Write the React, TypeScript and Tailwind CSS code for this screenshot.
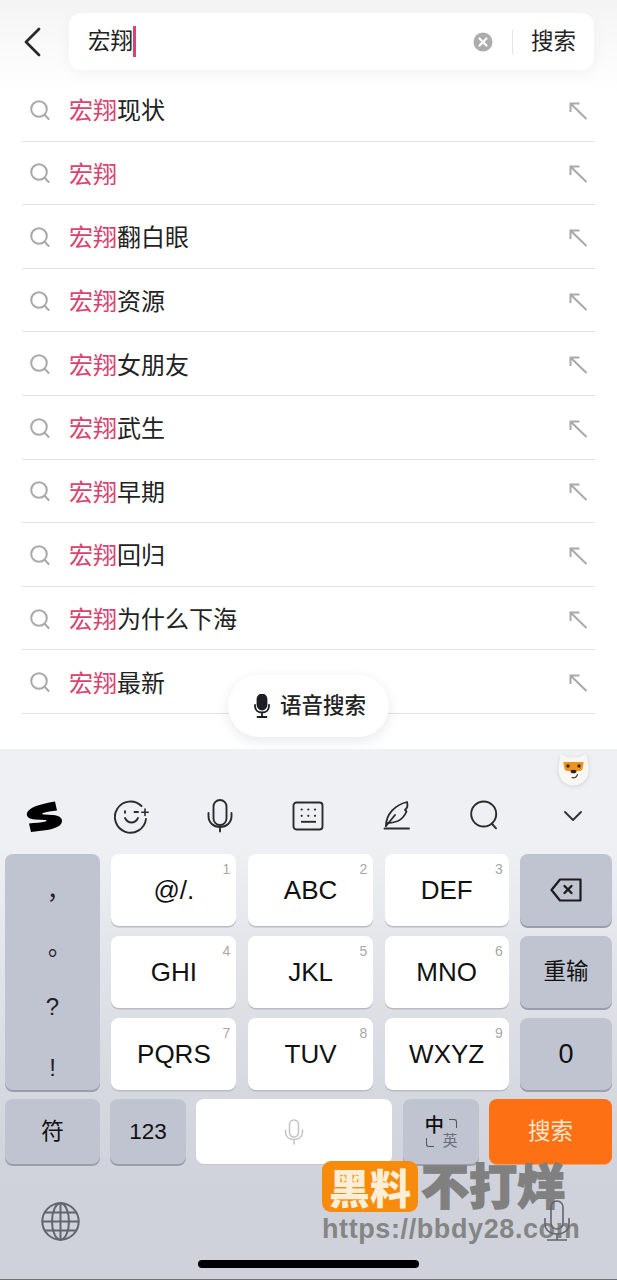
import { ReactNode } from "react";

const cjk = "font-['Liberation_Sans','Noto_Sans_CJK_SC',sans-serif]";

const suggestions = [
  "现状",
  "",
  "翻白眼",
  "资源",
  "女朋友",
  "武生",
  "早期",
  "回归",
  "为什么下海",
  "最新",
];

const SearchGlyph = () => (
  <svg width="22" height="22" viewBox="0 0 22 22" fill="none" stroke="#a9a9a9" strokeWidth="2" strokeLinecap="round">
    <circle cx="10" cy="10" r="7.8" />
    <path d="M15.6 15.8 19.6 20" />
  </svg>
);

const ArrowGlyph = () => (
  <svg width="20" height="20" viewBox="0 0 20 20" fill="none" stroke="#a9a9a9" strokeWidth="2">
    <path d="M2.5 1.6V11M1.6 2.5H11.5M2.5 2.5 18.5 18" />
  </svg>
);

const SuggestionRow = ({ suffix }: { suffix: string }) => (
  <div className="h-[63.6px] mx-[22px] flex items-center border-b border-[#e2e2e2]">
    <div className="w-[47px] pl-[7px] pt-[1px] shrink-0 flex">
      <SearchGlyph />
    </div>
    <div className="flex-1 text-[24px] leading-none pt-[4px] text-[#222]">
      <span className="text-[#d9436f]">宏翔</span>
      {suffix}
    </div>
    <div className="pr-[7px] pt-[3px] flex">
      <ArrowGlyph />
    </div>
  </div>
);

const Key = ({
  num,
  children,
  className = "bg-white shadow-[0_1.5px_0_#b9bcc6]",
}: {
  num?: string;
  children?: ReactNode;
  className?: string;
}) => (
  <div className={`relative flex items-center justify-center rounded-[8px] text-[26px] text-[#111] ${className}`}>
    {num && <span className="absolute top-[5px] right-[6px] text-[14px] leading-[20px] text-[#a8a8a8]">{num}</span>}
    {children}
  </div>
);

const grayKey = "bg-[#c0c4d0] shadow-[0_2px_0_#9a9dab]";

const ToolbarIcons = [
  <svg key="s" width="36" height="31" viewBox="0 0 36 31" fill="#000">
    <path d="M29 .5 31 9.5C26 10 20 11 17 12 15.5 12.7 16 13.5 18 13.5L27 14C33 14.5 36 17 36 20 36 25 29 27.5 21 29L5 31 3 22.5C9 22 15 21.5 19.5 20.5 21 20 21 19 19.5 19L9 18.5C3 18 0 15.5 1 12 2.5 7 13 3 29 .5Z" />
  </svg>,
  <svg key="e" width="36" height="36" viewBox="0 0 36 36" fill="none" stroke="#2b2b2b" strokeWidth="1.9" strokeLinecap="round">
    <path d="M27.5 8A15.6 15.6 0 1 0 32 21" />
    <path d="M11 20C14 26 21 26 24 20" />
    <path d="M11 13.2V14.8M20.5 14H24" />
    <path d="M31 11V17.5M27.8 14.2H34.2" strokeWidth="1.6" />
  </svg>,
  <svg key="m" width="26" height="34" viewBox="0 0 26 34" fill="none" stroke="#2b2b2b" strokeWidth="1.9" strokeLinecap="round">
    <rect x="6.5" y="1" width="13" height="25" rx="6.5" />
    <path d="M1.5 14V17C1.5 23.5 6.5 28 13 28S24.5 23.5 24.5 17V14M13 28V32.5" />
  </svg>,
  <svg key="k" width="32" height="30" viewBox="0 0 32 30" fill="none" stroke="#2b2b2b" strokeWidth="1.9">
    <rect x="1.5" y="1.5" width="29" height="27" rx="3" />
    <path d="M9 20.8H24" />
    <g fill="#2b2b2b" stroke="none">
      <circle cx="9.7" cy="8.5" r="1.1" />
      <circle cx="16.3" cy="8.5" r="1.1" />
      <circle cx="23" cy="8.5" r="1.1" />
      <circle cx="9.7" cy="14.8" r="1.1" />
      <circle cx="16.3" cy="14.8" r="1.1" />
      <circle cx="23" cy="14.8" r="1.1" />
    </g>
  </svg>,
  <svg key="f" width="28" height="32" viewBox="0 0 28 32" fill="none" stroke="#2b2b2b" strokeWidth="1.8" strokeLinecap="round" strokeLinejoin="round">
    <path d="M3 26C3 14 12 5 24 2C25 5 24.5 8 22 10L23.5 11.5C22 15 19 19 15 21C11 22.5 8 23 5 23" />
    <path d="M3 26 12 15" />
    <path d="M1.5 28.5H26" />
  </svg>,
  <svg key="q" width="30" height="32" viewBox="0 0 30 32" fill="none" stroke="#2b2b2b" strokeWidth="1.9" strokeLinecap="round">
    <circle cx="13.7" cy="14" r="12.5" />
    <path d="M21.7 23.5 26 28.3" />
  </svg>,
  <svg key="c" width="20" height="12" viewBox="0 0 20 12" fill="none" stroke="#333" strokeWidth="1.9" strokeLinecap="round" strokeLinejoin="round">
    <path d="M2 2 10 10 18 2" />
  </svg>,
];

export default function App() {
  return (
    <div className={`relative w-[617px] h-[1280px] overflow-hidden flex flex-col bg-white bg-[linear-gradient(#f4f4f4,#ffffff_95px)] ${cjk}`}>
      <div className="h-[78px] shrink-0 flex pt-[13px] pr-[23px]">
        <div className="w-[69px] h-[57px] shrink-0 flex items-center pl-[23px]">
          <svg width="20" height="30" viewBox="0 0 20 30" fill="none" stroke="#2a2a2a" strokeWidth="2.8" strokeLinecap="round" strokeLinejoin="round">
            <path d="M16 2 3 15 16 28" />
          </svg>
        </div>
        <div className="flex-1 h-[57px] rounded-[12px] bg-white shadow-[0_4px_14px_rgba(0,0,0,0.04)] flex items-center pl-[19px] pr-[18px]">
          <span className="text-[22.5px] leading-none pt-[2px] text-[#222]">宏翔</span>
          <div className="w-[3px] h-[31px] bg-[#d9436f]" />
          <div className="flex-1" />
          <svg width="20" height="20" viewBox="0 0 20 20">
            <circle cx="10" cy="10" r="9.5" fill="#acacac" />
            <path d="M6.5 6.5 13.5 13.5M13.5 6.5 6.5 13.5" stroke="#fff" strokeWidth="2.2" strokeLinecap="round" />
          </svg>
          <div className="w-px h-[24px] bg-[#e4e4e4] ml-[19px] mr-[18px]" />
          <span className="text-[22.5px] leading-none pt-[2px] text-[#222]">搜索</span>
        </div>
      </div>

      {suggestions.map((s, i) => (
        <SuggestionRow key={i} suffix={s} />
      ))}

      <div className="absolute left-[228px] top-[675px] w-[161px] h-[62px] rounded-full bg-white shadow-[0_4px_14px_rgba(0,0,0,0.09)] flex items-center pl-[26px] gap-[10px]">
        <svg width="16" height="24" viewBox="0 0 16 24" fill="none" stroke="#1d1d26" strokeWidth="1.8" strokeLinecap="round">
          <rect x="3.5" y="0.5" width="9" height="15" rx="4.5" fill="#1d1d26" />
          <path d="M1 11V12C1 16 4 18.5 8 18.5S15 16 15 12V11M8 18.5V23M3.5 23H12.5" />
        </svg>
        <span className="text-[21.5px] leading-none pt-[2px] font-medium text-[#222]">语音搜索</span>
      </div>

      <div className="mt-auto h-[531px] shrink-0 flex flex-col relative bg-[linear-gradient(#eff0f4_18%,#e4e6eb_36%,#d5d8df_65%,#cfd2da_82%)]">
        <svg className="absolute left-[558px] top-[4px] drop-shadow-[0_1px_2px_rgba(0,0,0,0.12)]" width="31" height="33" viewBox="0 0 31 33">
          <path d="M3 1C5 2 8 4 10 4.5C13 3.8 18 3.8 21 4.5C23 4 26 2 28 1C29 4 30 9 30.5 15C31 26 24 32.5 15.5 32.5S0 26 .5 15C1 9 2 4 3 1Z" fill="#f8f7f1" />
          <path d="M5.5 10.5C5 9.5 5.5 9 7 9H24C25.5 9 26 9.5 25.5 10.5L24.5 16C24 17.5 22.5 18 21 18H10C8.5 18 7 17.5 6.5 16Z" fill="#ee931f" />
          <circle cx="10" cy="13" r="1.7" fill="#3a2a1c" />
          <circle cx="21" cy="13" r="1.7" fill="#3a2a1c" />
          <ellipse cx="15.5" cy="18.5" rx="3" ry="1.8" fill="#2c2320" />
          <path d="M14 24.5C16 25.5 18.5 24.5 19.5 21.5" fill="none" stroke="#333" strokeWidth="1.1" strokeLinecap="round" />
        </svg>

        <div className="mt-[36px] h-[62px] grid grid-cols-7 shrink-0">
          {ToolbarIcons.map((icon, i) => (
            <div key={i} className="flex items-center justify-center">
              {icon}
            </div>
          ))}
        </div>

        <div className="mt-[7px] mx-[5px] grid grid-cols-[95px_125px_125.5px_124px_92px] gap-x-[11.4px] grid-rows-[72px_72px_72px] gap-y-[10px]">
          <div className={`row-span-3 rounded-[8px] ${grayKey} flex flex-col items-center pt-[14px] text-[24px] leading-none text-[#222]`}>
            <span className="h-[56px] shrink-0 flex items-center font-['Noto_Sans_CJK_TC',sans-serif]">，</span>
            <span className="h-[55px] shrink-0 flex items-center font-['Noto_Sans_CJK_TC',sans-serif]">。</span>
            <span className="h-[56px] shrink-0 flex items-center">?</span>
            <span className="h-[56px] shrink-0 mt-[5px] flex items-center">!</span>
          </div>
          <Key num="1">@/.</Key>
          <Key num="2">ABC</Key>
          <Key num="3">DEF</Key>
          <Key className={grayKey}>
            <svg width="32" height="24" viewBox="0 0 32 24" fill="none" stroke="#1c1c1c" strokeWidth="2.2" strokeLinejoin="round">
              <path d="M10 1.5H30.5V22.5H10L1.5 12Z" />
              <path d="M14.5 8 21.5 15M21.5 8 14.5 15" strokeLinecap="round" strokeWidth="2.4" />
            </svg>
          </Key>
          <Key num="4">GHI</Key>
          <Key num="5">JKL</Key>
          <Key num="6">MNO</Key>
          <Key className={`${grayKey} !text-[22.5px]`}>重输</Key>
          <Key num="7">PQRS</Key>
          <Key num="8">TUV</Key>
          <Key num="9">WXYZ</Key>
          <Key className={`${grayKey} !text-[27px]`}>0</Key>
        </div>

        <div className="mt-[9px] mx-[5px] h-[65px] flex shrink-0">
          <Key className={`w-[95px] mr-[10px] ${grayKey} !text-[23px]`}>符</Key>
          <Key className={`w-[76px] mr-[10px] ${grayKey} !text-[22.5px]`}>123</Key>
          <Key className="w-[196px] mr-[11px] bg-white shadow-[0_1px_0_#c5c8d1]">
            <svg width="20" height="26" viewBox="0 0 20 26" fill="none" stroke="#c6c6c6" strokeWidth="1.6" strokeLinecap="round">
              <rect x="5.5" y="1" width="9" height="17" rx="4.5" />
              <path d="M1.5 11V13C1.5 18 5.5 20.5 10 20.5S18.5 18 18.5 13V11M10 20.5V25" />
            </svg>
          </Key>
          <Key className={`w-[76px] mr-[10px] ${grayKey}`}>
            <div className="relative w-[33px] h-[32px]">
              <span className="absolute left-0 top-0 text-[19.5px] leading-none font-medium text-[#111]">中</span>
              <span className="absolute right-0 bottom-0 text-[15px] leading-none text-[#6a6f80]">英</span>
              <span className="absolute right-[1px] top-[3px] w-[8px] h-[9px] border-t border-r border-[#555] rounded-tr-[3px]" />
              <span className="absolute left-[1px] bottom-[1px] w-[8px] h-[9px] border-b border-l border-[#555] rounded-bl-[3px]" />
            </div>
          </Key>
          <Key className="w-[123px] !bg-[#fd7014] !text-[22.5px] !text-[#fde6cf] shadow-[0_1px_0_#f2a06a]">搜索</Key>
        </div>

        <div className="pl-[41px] mt-[38px] flex shrink-0">
          <svg width="39" height="39" viewBox="0 0 39 39" fill="none" stroke="#62656d" strokeWidth="2">
            <circle cx="19.5" cy="19.5" r="18.2" />
            <ellipse cx="19.5" cy="19.5" rx="8.5" ry="18.2" />
            <path d="M19.5 1.3V37.7M1.3 19.5H37.7M4 10.5H35M4 28.5H35" />
          </svg>
        </div>
        <div className="mt-[19px] mx-auto w-[221px] h-[8px] rounded-full bg-black shrink-0" />
        <div className="mt-auto h-px bg-[#707070] shrink-0" />
      </div>

      <div className="absolute left-[322px] top-[1161px] w-[96px] h-[51px] rounded-[9px] bg-[#f78c0c] flex items-center justify-center text-[#fdeed8] text-[41px] leading-none font-black font-['Noto_Sans_CJK_SC',sans-serif]">
        黑料
      </div>
      <div className="absolute left-[421px] top-[1158px] text-[#808080] text-[48px] leading-[50px] font-black [-webkit-text-stroke:1.4px_#808080] font-['Noto_Sans_CJK_SC',sans-serif]">
        不打烊
      </div>
      <div className="absolute left-[322px] top-[1214px] text-[#858585] text-[27px] leading-[30px] font-bold font-['Liberation_Sans',sans-serif] tracking-[0.6px]">
        https://bbdy28.com
      </div>
      <svg className="absolute left-[543px] top-[1200px]" width="28" height="42" viewBox="0 0 28 42" fill="none" stroke="#62656d" strokeWidth="1.6">
        <rect x="8" y="1" width="12" height="28" rx="6" />
        <path d="M2 18V24C2 30 7 34 14 34S26 30 26 24V18M14 34V40M4 40H24" />
      </svg>
    </div>
  );
}
